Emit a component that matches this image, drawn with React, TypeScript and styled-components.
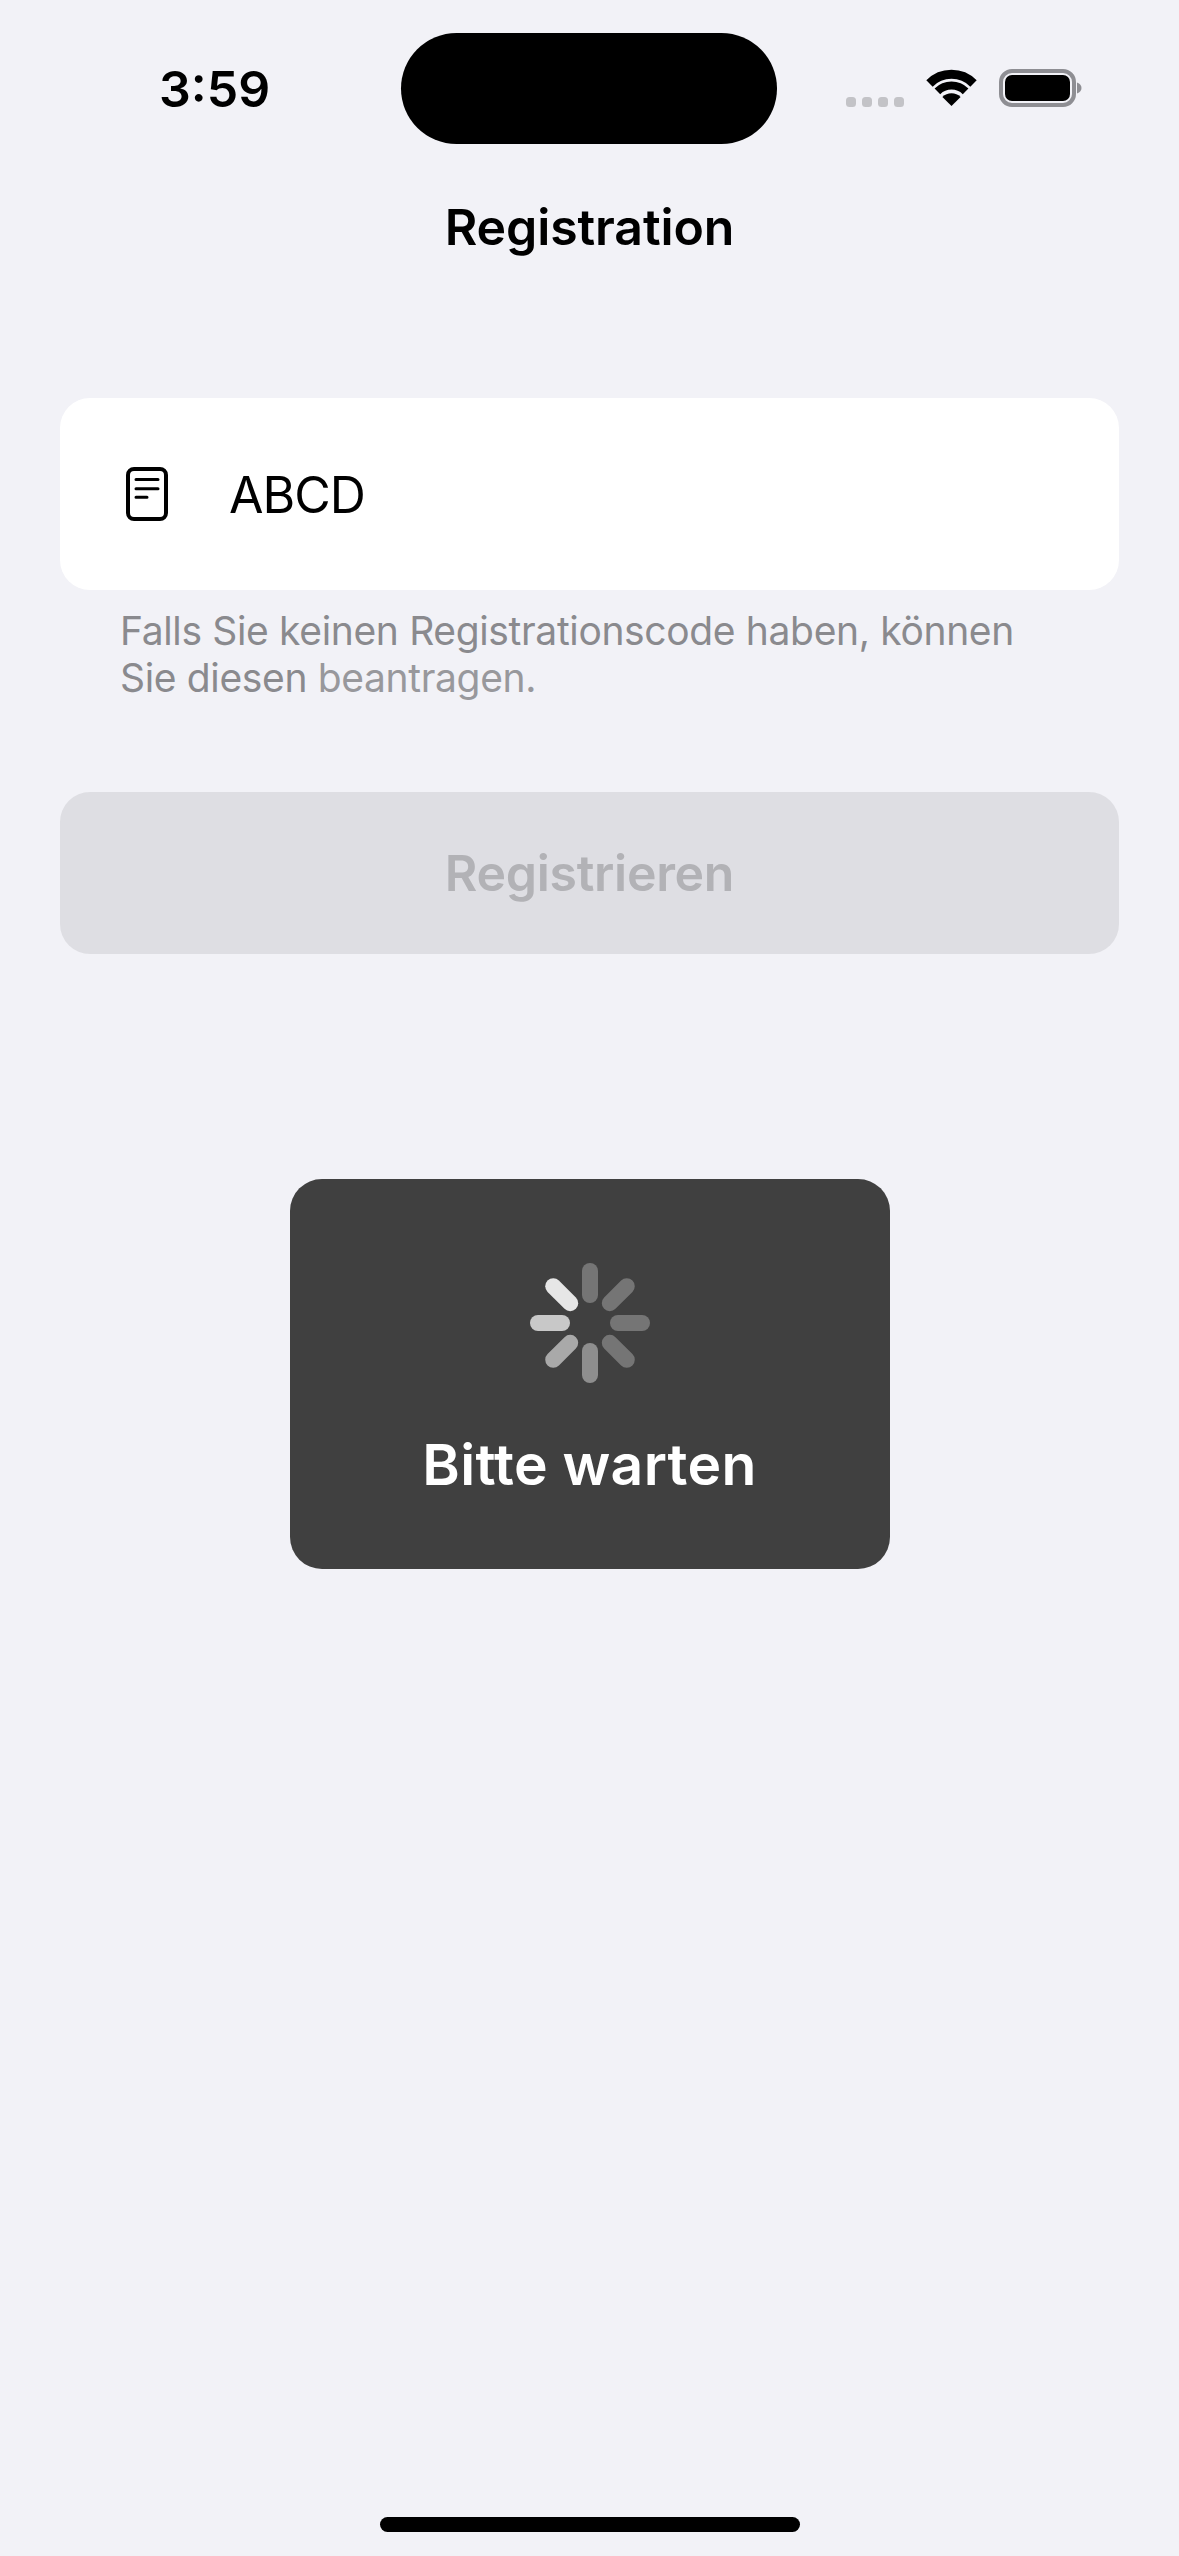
import React from "react";
import styled, { createGlobalStyle } from "styled-components";

const GlobalStyle = createGlobalStyle`
  html, body {
    margin: 0;
    padding: 0;
    background: #f2f2f7;
  }
  body {
    font-family: Inter, "Noto Sans", "Liberation Sans", sans-serif;
  }
`;

// 菊花图的八根辐条，从正上方顺时针
const SPOKES = ["#757575", "#757575", "#757575", "#757575", "#8e8e8e", "#a9a9a9", "#c8c8c8", "#e6e6e6"];

const SignalDots: React.FC = () => (
  <svg width="58" height="10" viewBox="0 0 58 10">
    {[0, 16, 32, 48].map(x => (
      <rect key={x} x={x} y="0" width="10" height="10" rx="3.5" fill="#c3c3c7" />
    ))}
  </svg>
);

const WifiIcon: React.FC = () => (
  <svg width="51" height="37" viewBox="0 0 51 37">
    <path d="M3.5 14.5A31 31 0 0 1 47.5 14.5" fill="none" stroke="#000" strokeWidth="9" />
    <path d="M11.4 22.4A20 20 0 0 1 39.6 22.4" fill="none" stroke="#000" strokeWidth="8" />
    <path d="M25.5 37L16.4 27.9A13 13 0 0 1 34.6 27.9Z" fill="#000" />
  </svg>
);

const BatteryIcon: React.FC = () => (
  <svg width="83" height="38" viewBox="0 0 83 38">
    <rect x="2" y="2" width="73" height="34" rx="11" fill="none" stroke="#8e8e93" strokeWidth="4" />
    <rect x="6" y="6" width="65" height="26" rx="7" fill="#000" />
    <path d="M78 13.5C81 14.5 82.5 16.5 82.5 19S81 23.5 78 24.5Z" fill="#8e8e93" />
  </svg>
);

const CodeIcon: React.FC = () => (
  <svg width="42" height="54" viewBox="0 0 42 54">
    <rect x="2" y="2" width="38" height="50" rx="6" fill="none" stroke="#000" strokeWidth="4" />
    <path d="M10 12.4H32M10 21.7H32M10 30.2H21" fill="none" stroke="#000" strokeWidth="3" strokeLinecap="round" />
  </svg>
);

const Spinner: React.FC = () => (
  <svg width="120" height="120" viewBox="-60 -60 120 120">
    {SPOKES.map((color, i) => (
      <line
        key={i}
        x1="0"
        y1="-28"
        x2="0"
        y2="-52"
        stroke={color}
        strokeWidth="16"
        strokeLinecap="round"
        transform={`rotate(${i * 45})`}
      />
    ))}
  </svg>
);

const App: React.FC = () => (
  <Page>
    <GlobalStyle />
    <StatusBar>
      <Time>3:59</Time>
      <Island />
      <StatusIcons>
        <DotsSlot>
          <SignalDots />
        </DotsSlot>
        <WifiIcon />
        <BatteryIcon />
      </StatusIcons>
    </StatusBar>

    <Title>Registration</Title>

    <Form>
      <CodeField>
        <CodeIcon />
        <CodeValue>ABCD</CodeValue>
      </CodeField>
      <Hint>
        Falls Sie keinen Registrationscode haben, können
        <br />
        Sie diesen <HintLink>beantragen.</HintLink>
      </Hint>
      <SubmitButton disabled>Registrieren</SubmitButton>
    </Form>

    <Loading>
      <Spinner />
      <LoadingText>Bitte warten</LoadingText>
    </Loading>

    <HomeIndicator />
  </Page>
);

export default App;

const Page = styled.div`
  width: 1179px;
  height: 2556px;
  background: #f2f2f7;
  display: flex;
  flex-direction: column;
  overflow: hidden;
`;

const StatusBar = styled.div`
  display: flex;
  align-items: center;
  padding: 33px 0 0 159px;
  height: 111px;
`;

const Time = styled.div`
  width: 242px;
  font-size: 50px;
  line-height: 60px;
  font-weight: 600;
  color: #000;
`;

const Island = styled.div`
  width: 376px;
  height: 111px;
  border-radius: 56px;
  background: #000;
`;

const StatusIcons = styled.div`
  display: flex;
  align-items: flex-start;
  gap: 22px;
  margin: 0 0 2px 69px;
  height: 38px;
`;

const DotsSlot = styled.div`
  margin-top: 28px;
  display: flex;
`;

const Title = styled.div`
  margin-top: 53px;
  text-align: center;
  font-size: 50px;
  line-height: 60px;
  font-weight: 600;
  letter-spacing: -0.1px;
  color: #000;
`;

const Form = styled.div`
  margin-top: 141px;
  padding: 0 60px;
  display: flex;
  flex-direction: column;
`;

const CodeField = styled.div`
  height: 192px;
  border-radius: 30px;
  background: #fff;
  display: flex;
  align-items: center;
  padding-left: 66px;
  gap: 61px;
`;

const CodeValue = styled.div`
  padding-top: 2px;
  font-size: 50px;
  line-height: 60px;
  font-weight: 400;
  letter-spacing: -1px;
  color: #000;
`;

const Hint = styled.div`
  margin-top: 17px;
  padding-left: 60px;
  font-size: 39px;
  line-height: 47px;
  letter-spacing: -0.35px;
  color: #8a8a8e;
`;

const HintLink = styled.span`
  color: #98989c;
`;

const SubmitButton = styled.button`
  margin-top: 91px;
  height: 162px;
  border: 0;
  border-radius: 30px;
  background: #dedee3;
  color: #b2b2b6;
  font-family: inherit;
  font-size: 50px;
  font-weight: 600;
  letter-spacing: -0.3px;
`;

const Loading = styled.div`
  margin: 225px auto 0;
  width: 600px;
  height: 390px;
  box-sizing: border-box;
  padding-top: 84px;
  border-radius: 32px;
  background: #404040;
  display: flex;
  flex-direction: column;
  align-items: center;
`;

const LoadingText = styled.div`
  margin-top: 48px;
  font-size: 57px;
  line-height: 68px;
  font-weight: 600;
  letter-spacing: 0.3px;
  color: #fff;
`;

const HomeIndicator = styled.div`
  margin: auto auto 24px;
  width: 420px;
  height: 15px;
  border-radius: 8px;
  background: #000;
`;
